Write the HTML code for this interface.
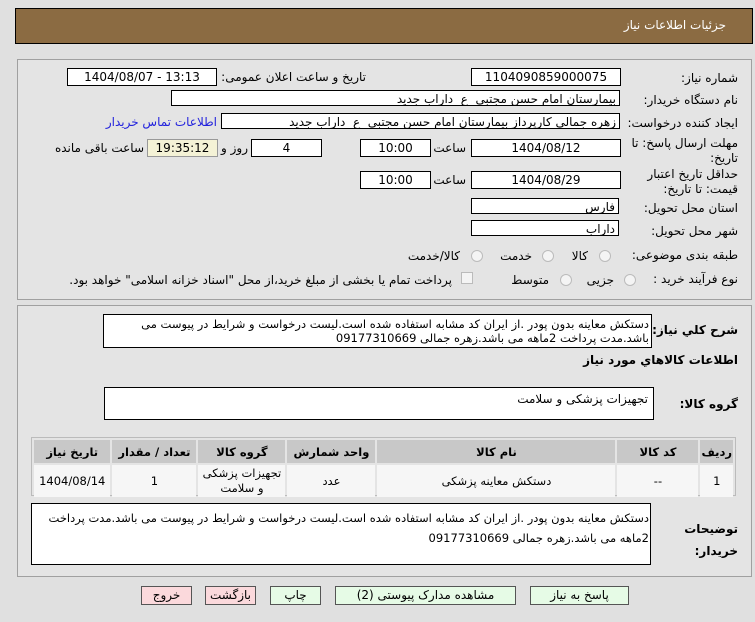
<!DOCTYPE html>
<html><head><meta charset="utf-8"><style>
body{margin:0;width:755px;height:622px;background:#e0e0e0;font-family:Tahoma,"DejaVu Sans","Liberation Sans",sans-serif;font-size:12px;color:#000;position:relative;overflow:hidden}
.a{position:absolute}
.hd{left:15px;top:8px;width:736px;height:34px;background:#8b6b42;border:1px solid #000;}
.hd span{position:absolute;right:26px;top:9px;color:#fff;font-size:12px}
.pn{border:1px solid #a0a0a0;background:#e4e4e4}
.in{position:absolute;background:#fff;border:1px solid #000;height:16px;line-height:16px;text-align:center;font-size:12px;white-space:nowrap;overflow:hidden}
.r{text-align:right;padding-right:3px;box-sizing:border-box}
.lb{position:absolute;direction:rtl;white-space:nowrap;font-size:12px}
.rad{position:absolute;width:10px;height:10px;border:1px solid #bbb;border-radius:50%;background:#f4f4f4}
table{border-collapse:separate;border-spacing:2px}
td,th{font-size:11.5px;text-align:center}
th{background:#c8c8c8;height:21px}
td{background:#f6f6f6;height:27px}
.btn{position:absolute;top:586px;height:17px;border:1px solid #555;background:#e6fbe6;text-align:center;line-height:17px;font-size:12px}
.pk{background:#fbd9dc}
</style></head><body>
<div class="a hd"><span>جزئیات اطلاعات نیاز</span></div>
<div class="a pn" style="left:17px;top:59px;width:733px;height:239px"></div>
<div class="a pn" style="left:17px;top:305px;width:733px;height:270px"></div>

<div class="lb" style="right:17px;top:71px">شماره نیاز:</div>
<div class="in" style="left:471px;top:68px;width:148px">1104090859000075</div>
<div class="lb" style="right:389px;top:70px">تاریخ و ساعت اعلان عمومی:</div>
<div class="in" style="left:67px;top:68px;width:148px">1404/08/07 - 13:13</div>

<div class="lb" style="right:17px;top:93px">نام دستگاه خریدار:</div>
<div class="in r" style="left:171px;top:90px;width:449px">بیمارستان امام حسن مجتبی&nbsp; ع&nbsp; داراب جدید</div>

<div class="lb" style="right:17px;top:116px">ایجاد کننده درخواست:</div>
<div class="in r" style="left:221px;top:113px;width:399px">زهره جمالی کارپرداز بیمارستان امام حسن مجتبی&nbsp; ع&nbsp; داراب جدید</div>
<div class="lb" style="right:538px;top:115px;color:#2222dd">اطلاعات تماس خریدار</div>

<div class="lb" style="right:17px;top:136px;line-height:15px">مهلت ارسال پاسخ: تا<br>تاریخ:</div>
<div class="in" style="left:471px;top:139px;width:148px">1404/08/12</div>
<div class="lb" style="right:289px;top:141px">ساعت</div>
<div class="in" style="left:360px;top:139px;width:69px">10:00</div>
<div class="in" style="left:251px;top:139px;width:69px">4</div>
<div class="lb" style="right:507px;top:141px">روز و</div>
<div class="in" style="left:147px;top:139px;width:69px;background:#f4f2d6;border-color:#999">19:35:12</div>
<div class="lb" style="right:611px;top:141px">ساعت باقی مانده</div>

<div class="lb" style="right:17px;top:167px;line-height:15px">حداقل تاریخ اعتبار<br>قیمت: تا تاریخ:</div>
<div class="in" style="left:471px;top:171px;width:148px">1404/08/29</div>
<div class="lb" style="right:289px;top:173px">ساعت</div>
<div class="in" style="left:360px;top:171px;width:69px">10:00</div>

<div class="lb" style="right:17px;top:201px">استان محل تحویل:</div>
<div class="in r" style="left:471px;top:198px;width:148px">فارس</div>
<div class="lb" style="right:17px;top:224px">شهر محل تحویل:</div>
<div class="in r" style="left:471px;top:220px;width:148px">داراب</div>

<div class="lb" style="right:17px;top:248px">طبقه بندی موضوعی:</div>
<div class="rad" style="left:599px;top:250px"></div><div class="lb" style="right:167px;top:249px">کالا</div>
<div class="rad" style="left:542px;top:250px"></div><div class="lb" style="right:223px;top:249px">خدمت</div>
<div class="rad" style="left:471px;top:250px"></div><div class="lb" style="right:295px;top:249px">کالا/خدمت</div>

<div class="lb" style="right:17px;top:272px">نوع فرآیند خرید :</div>
<div class="rad" style="left:624px;top:274px"></div><div class="lb" style="right:141px;top:273px">جزیی</div>
<div class="rad" style="left:560px;top:274px"></div><div class="lb" style="right:206px;top:273px">متوسط</div>
<div class="a" style="left:461px;top:272px;width:10px;height:10px;border:1px solid #bbb;background:#f4f4f4"></div>
<div class="lb" style="right:303px;top:273px">پرداخت تمام یا بخشی از مبلغ خرید،از محل "اسناد خزانه اسلامی" خواهد بود.</div>

<div class="lb" style="right:17px;top:323px;font-weight:bold">شرح کلي نياز:</div>
<div class="a" style="left:103px;top:314px;width:549px;height:34px;background:#fff;border:1px solid #000;direction:rtl;padding:2px 2px;font-size:11.5px;line-height:14px;box-sizing:border-box;overflow:hidden">دستکش معاینه بدون پودر .از ایران کد مشابه استفاده شده است.لیست درخواست و شرایط در پیوست می باشد.مدت پرداخت 2ماهه می باشد.زهره جمالی 09177310669</div>
<div class="lb" style="right:17px;top:353px;font-weight:bold">اطلاعات کالاهاي مورد نياز</div>
<div class="lb" style="right:17px;top:397px;font-weight:bold">گروه کالا:</div>
<div class="a" style="left:104px;top:387px;width:550px;height:33px;background:#fff;border:1px solid #000;direction:rtl;box-sizing:border-box;padding:4px 5px;font-size:12px">تجهیزات پزشکی و سلامت</div>

<div class="a" style="left:31px;top:437px;width:705px;height:59px;border:1px solid #bbb;box-sizing:border-box">
<table style="width:703px;direction:rtl" dir="rtl">
<tr><th style="width:25px">ردیف</th><th style="width:79px">کد کالا</th><th style="width:236px">نام کالا</th><th style="width:86px">واحد شمارش</th><th style="width:85px">گروه کالا</th><th style="width:82px">تعداد / مقدار</th><th>تاریخ نیاز</th></tr>
<tr><td>1</td><td>--</td><td>دستکش معاینه پزشکی</td><td>عدد</td><td style="line-height:15px">تجهیزات پزشکی و سلامت</td><td>1</td><td>1404/08/14</td></tr>
</table></div>

<div class="lb" style="right:17px;top:518px;font-weight:bold;line-height:22px">توضیحات<br>خریدار:</div>
<div class="a" style="left:31px;top:503px;width:620px;height:62px;background:#fff;border:1px solid #000;direction:rtl;box-sizing:border-box;padding:4px 1px;font-size:11.5px;line-height:20px">دستکش معاینه بدون پودر .از ایران کد مشابه استفاده شده است.لیست درخواست و شرایط در پیوست می باشد.مدت پرداخت 2ماهه می باشد.زهره جمالی 09177310669</div>

<div class="btn" style="left:530px;width:97px">پاسخ به نیاز</div>
<div class="btn" style="left:335px;width:179px">مشاهده مدارک پیوستی (2)</div>
<div class="btn" style="left:270px;width:49px">چاپ</div>
<div class="btn pk" style="left:205px;width:49px">بازگشت</div>
<div class="btn pk" style="left:141px;width:49px">خروج</div>
</body></html>
